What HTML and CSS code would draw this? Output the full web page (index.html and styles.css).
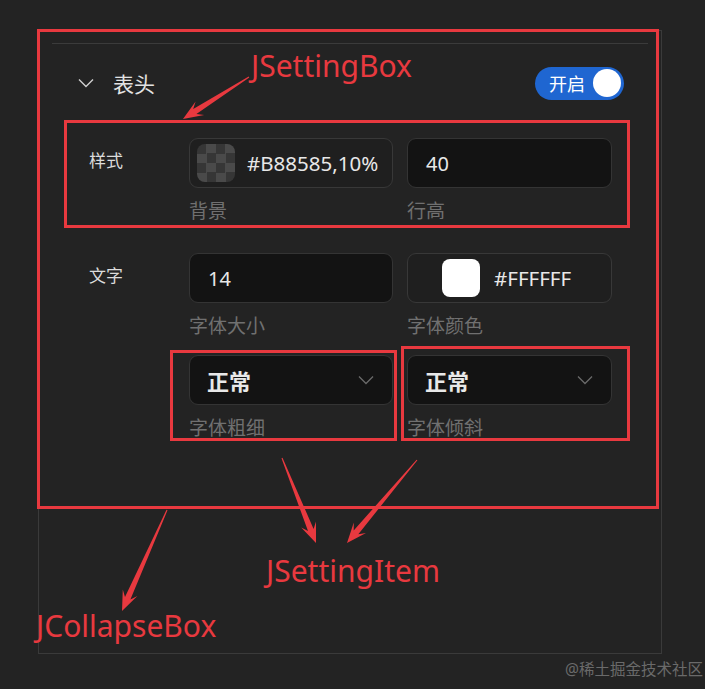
FILE: index.html
```html
<!DOCTYPE html>
<html lang="zh-CN">
<head>
<meta charset="UTF-8">
<meta name="viewport" content="width=device-width, initial-scale=1.0">
<title>JCollapseBox</title>
<link rel="stylesheet" href="styles.css">
</head>
<body>

<!-- COLLAPSE BOX -->
<div class="collapse-box">
    <div class="divider"></div>
    <div class="collapse-header">
        <div class="collapse-title">
            <svg class="chevron" width="16" height="10" viewBox="0 0 16 10"><path d="M1 1.5 L8 8.5 L15 1.5" fill="none" stroke="#cfcfcf" stroke-width="1.4"/></svg>
            <span>表头</span>
        </div>
        <div class="switch">
            <span>开启</span>
            <i class="knob"></i>
        </div>
    </div>

    <!-- 样式 -->
    <div class="setting-box">
        <div class="setting-label">样式</div>
        <div class="setting-grid">
            <div class="setting-item">
                <div class="control color-control">
                    <span class="swatch checker"></span>
                    <span>#B88585,10%</span>
                </div>
                <div class="item-label">背景</div>
            </div>
            <div class="setting-item">
                <div class="control input-control">40</div>
                <div class="item-label">行高</div>
            </div>
        </div>
    </div>

    <!-- 文字 -->
    <div class="setting-box">
        <div class="setting-label">文字</div>
        <div class="setting-grid">
            <div class="setting-item">
                <div class="control input-control">14</div>
                <div class="item-label">字体大小</div>
            </div>
            <div class="setting-item">
                <div class="control color-control wide">
                    <span class="swatch white"></span>
                    <span>#FFFFFF</span>
                </div>
                <div class="item-label">字体颜色</div>
            </div>
            <div class="setting-item">
                <div class="control select-control">
                    <span>正常</span>
                    <svg width="16" height="10" viewBox="0 0 16 10"><path d="M1 1.5 L8 8.5 L15 1.5" fill="none" stroke="#6a6a6a" stroke-width="1.3"/></svg>
                </div>
                <div class="item-label">字体粗细</div>
            </div>
            <div class="setting-item">
                <div class="control select-control">
                    <span>正常</span>
                    <svg width="16" height="10" viewBox="0 0 16 10"><path d="M1 1.5 L8 8.5 L15 1.5" fill="none" stroke="#6a6a6a" stroke-width="1.3"/></svg>
                </div>
                <div class="item-label">字体倾斜</div>
            </div>
        </div>
    </div>
</div>

<!-- ANNOTATIONS -->
<div class="mark mark-collapse"></div>
<div class="mark mark-box"></div>
<div class="mark mark-item-a"></div>
<div class="mark mark-item-b"></div>

<svg class="arrows" width="705" height="689" viewBox="0 0 705 689">
    <polygon points="249.3,77.4 196.4,114 204.2,115 183,119 195.6,101.5 193.2,109 248.7,76.6"/>
    <polygon points="281.5,458.2 308,531.1 301.2,527.4 316,543 316,521.4 313.6,528.9 282.5,457.8"/>
    <polygon points="416.6,459.7 353.7,530.4 353.8,522.5 347,543 366,532.9 358.3,534.2 417.4,460.3"/>
    <polygon points="166.5,509.8 125,597 122.8,589.4 122,611 137.4,596 130.4,599.4 167.5,510.2"/>
</svg>

<div class="note note-box">JSettingBox</div>
<div class="note note-item">JSettingItem</div>
<div class="note note-collapse">JCollapseBox</div>

<div class="watermark">@稀土掘金技术社区</div>

</body>
</html>
```

FILE: styles.css
```css
body {
    margin: 0;
    width: 705px;
    height: 689px;
    background: #232323;
    color: #e6e6e6;
    font-family: "Noto Sans", "Noto Sans CJK SC", sans-serif;
    position: relative;
    overflow: hidden;
}

/* COLLAPSE BOX */
.collapse-box {
    box-sizing: border-box;
    width: 624px;
    height: 624px;
    margin: 30px 0 0 38px;
    border: 1px solid #3a3a3a;
    padding-top: 12px;
}

.divider {
    height: 1px;
    margin: 0 13px;
    background: #3b3b3b;
}

.collapse-header {
    height: 78px;
    display: flex;
    align-items: center;
    justify-content: space-between;
    padding: 0 37px 0 39px;
}

.collapse-title {
    display: flex;
    align-items: center;
    gap: 19px;
    font-size: 21px;
    color: #e2e2e2;
}

.switch {
    box-sizing: border-box;
    width: 89px;
    height: 33px;
    border-radius: 17px;
    background: #1f66d1;
    display: flex;
    align-items: center;
    justify-content: space-between;
    padding: 0 3px 0 14px;
    font-size: 18px;
    color: #fff;
}

.knob {
    width: 28px;
    height: 28px;
    border-radius: 50%;
    background: #fff;
}

/* SETTING BOX */
.setting-box {
    display: flex;
    padding: 0 49px 0 50px;
    margin-top: 16px;
}

.setting-box + .setting-box {
    margin-top: 28px;
}

.setting-label {
    width: 100px;
    line-height: 46px;
    font-size: 17px;
    color: #dcdcdc;
}

.setting-grid {
    display: grid;
    grid-template-columns: 204px 205px;
    column-gap: 14px;
    row-gap: 15px;
}

/* SETTING ITEM */
.control {
    box-sizing: border-box;
    height: 50px;
    border-radius: 9px;
    border: 1px solid #343434;
    display: flex;
    align-items: center;
    font-size: 20px;
    color: #e8e8e8;
}

.input-control {
    background: #131313;
    padding-left: 18px;
}

.color-control {
    background: #1f1f1f;
    border-color: #383838;
    padding-left: 7px;
    gap: 12px;
    font-size: 20.5px;
}

.color-control.wide {
    padding-left: 34px;
    gap: 14px;
}

.select-control {
    background: #131313;
    justify-content: space-between;
    padding: 0 18px 0 17px;
    font-size: 22px;
    font-weight: bold;
}

.swatch {
    width: 38px;
    height: 38px;
    border-radius: 8px;
}

.checker {
    background: conic-gradient(#4a4a4a 25%, #363636 0 50%, #4a4a4a 0 75%, #363636 0);
    background-size: 19px 19px;
}

.white {
    background: #fff;
}

.item-label {
    margin-top: 9px;
    line-height: 28px;
    font-size: 19px;
    color: #707070;
}

/* ANNOTATIONS */
.mark {
    position: absolute;
    box-sizing: border-box;
    border: 3px solid #e8393f;
}

.mark-collapse { left: 37px; top: 29px; width: 622px; height: 480px; }
.mark-box { left: 64px; top: 120px; width: 566px; height: 108px; }
.mark-item-a { left: 170px; top: 350px; width: 227px; height: 91px; }
.mark-item-b { left: 401px; top: 346px; width: 229px; height: 95px; }

.arrows {
    position: absolute;
    left: 0;
    top: 0;
    fill: #e8393f;
}

.note {
    position: absolute;
    font-size: 30px;
    line-height: 40px;
    color: #e8393f;
}

.note-box { left: 251px; top: 46px; }
.note-item { left: 266px; top: 551px; }
.note-collapse { left: 36px; top: 606px; }

.watermark {
    position: absolute;
    right: 2px;
    top: 657px;
    font-size: 15.5px;
    color: #6a6a6a;
}
```
